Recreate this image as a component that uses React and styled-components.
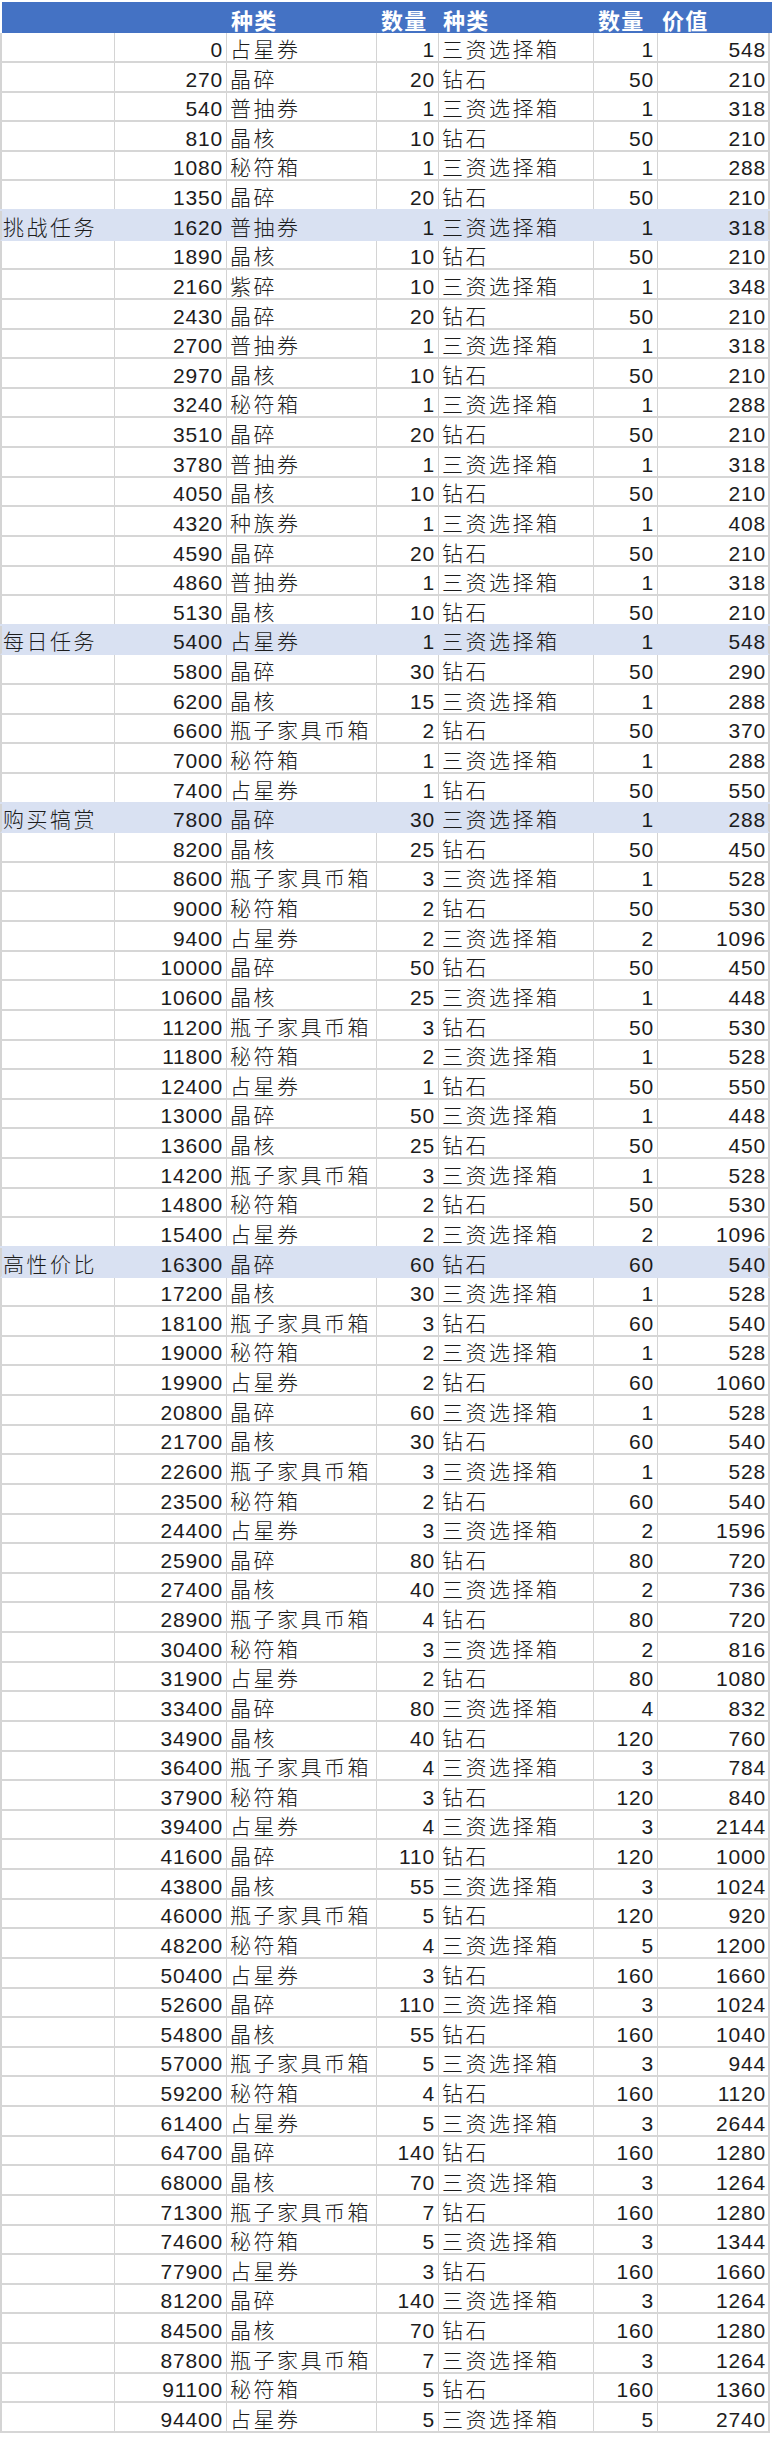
import React from 'react';
import styled, { createGlobalStyle } from 'styled-components';

const GlobalStyle = createGlobalStyle`
    html, body {
        margin: 0;
        padding: 0;
        background: #fff;
    }
    body {
        font-family: "Liberation Sans", "Noto Sans CJK SC", sans-serif;
        color: #1c1c1c;
    }
`;

const COLUMNS = '113px 112px 150px 62px 155px 64px 110px';

const Sheet = styled.div`
    width: 772px;
    padding-top: 2px;
`;

const HeaderRow = styled.div`
    display: grid;
    grid-template-columns: 113px 112px 150px 62px 155px 64px 1fr;
    height: 31.33px;
    margin-left: 2px;
    background: #4472c4;
`;

const HeaderCell = styled.div`
    display: flex;
    align-items: flex-end;
    padding-left: 4px;
    color: #fff;
    font-weight: 700;
    font-size: 22px;
    line-height: 22px;
    letter-spacing: 1.3px;
    white-space: nowrap;
`;

const Row = styled.div`
    display: grid;
    grid-template-columns: ${COLUMNS};
    box-sizing: border-box;
    width: 770px;
    height: 29.64px;
    border-left: 2px solid #d4d4d4;
    border-right: 2px solid #d4d4d4;
    border-bottom: 2px solid ${(p) => (p.$hl ? '#d9e1f2' : '#d6d6d6')};
    background: ${(p) => (p.$hl ? '#d9e1f2' : '#fff')};
    box-shadow: ${(p) => (p.$hl ? '0 -2px 0 #d9e1f2' : 'none')};

    &:first-of-type {
        height: 31px;
    }
`;

const Cell = styled.div`
    display: flex;
    align-items: flex-end;
    justify-content: ${(p) => (p.$num ? 'flex-end' : 'flex-start')};
    box-sizing: border-box;
    min-width: 0;
    padding: 0 ${(p) => (p.$num ? p.$pr || 3 : 0)}px 1px
        ${(p) => (p.$num ? 0 : p.$pl || 3)}px;
    border-right: 1px solid ${(p) => (p.$last || p.$hl ? 'transparent' : '#d4d4d4')};
    font-size: 21px;
    line-height: 21px;
    font-weight: 300;
    letter-spacing: ${(p) => (p.$num ? 0.8 : 2.5)}px;
    white-space: nowrap;
    overflow: hidden;
`;

const HEADERS = ['', '', '种类', '数量', '种类', '数量', '价值'];

// label, points, item, qty, item, qty, value
const ROWS = [
    ['', 0, '占星券', 1, '三资选择箱', 1, 548],
    ['', 270, '晶碎', 20, '钻石', 50, 210],
    ['', 540, '普抽券', 1, '三资选择箱', 1, 318],
    ['', 810, '晶核', 10, '钻石', 50, 210],
    ['', 1080, '秘符箱', 1, '三资选择箱', 1, 288],
    ['', 1350, '晶碎', 20, '钻石', 50, 210],
    ['挑战任务', 1620, '普抽券', 1, '三资选择箱', 1, 318],
    ['', 1890, '晶核', 10, '钻石', 50, 210],
    ['', 2160, '紫碎', 10, '三资选择箱', 1, 348],
    ['', 2430, '晶碎', 20, '钻石', 50, 210],
    ['', 2700, '普抽券', 1, '三资选择箱', 1, 318],
    ['', 2970, '晶核', 10, '钻石', 50, 210],
    ['', 3240, '秘符箱', 1, '三资选择箱', 1, 288],
    ['', 3510, '晶碎', 20, '钻石', 50, 210],
    ['', 3780, '普抽券', 1, '三资选择箱', 1, 318],
    ['', 4050, '晶核', 10, '钻石', 50, 210],
    ['', 4320, '种族券', 1, '三资选择箱', 1, 408],
    ['', 4590, '晶碎', 20, '钻石', 50, 210],
    ['', 4860, '普抽券', 1, '三资选择箱', 1, 318],
    ['', 5130, '晶核', 10, '钻石', 50, 210],
    ['每日任务', 5400, '占星券', 1, '三资选择箱', 1, 548],
    ['', 5800, '晶碎', 30, '钻石', 50, 290],
    ['', 6200, '晶核', 15, '三资选择箱', 1, 288],
    ['', 6600, '瓶子家具币箱', 2, '钻石', 50, 370],
    ['', 7000, '秘符箱', 1, '三资选择箱', 1, 288],
    ['', 7400, '占星券', 1, '钻石', 50, 550],
    ['购买犒赏', 7800, '晶碎', 30, '三资选择箱', 1, 288],
    ['', 8200, '晶核', 25, '钻石', 50, 450],
    ['', 8600, '瓶子家具币箱', 3, '三资选择箱', 1, 528],
    ['', 9000, '秘符箱', 2, '钻石', 50, 530],
    ['', 9400, '占星券', 2, '三资选择箱', 2, 1096],
    ['', 10000, '晶碎', 50, '钻石', 50, 450],
    ['', 10600, '晶核', 25, '三资选择箱', 1, 448],
    ['', 11200, '瓶子家具币箱', 3, '钻石', 50, 530],
    ['', 11800, '秘符箱', 2, '三资选择箱', 1, 528],
    ['', 12400, '占星券', 1, '钻石', 50, 550],
    ['', 13000, '晶碎', 50, '三资选择箱', 1, 448],
    ['', 13600, '晶核', 25, '钻石', 50, 450],
    ['', 14200, '瓶子家具币箱', 3, '三资选择箱', 1, 528],
    ['', 14800, '秘符箱', 2, '钻石', 50, 530],
    ['', 15400, '占星券', 2, '三资选择箱', 2, 1096],
    ['高性价比', 16300, '晶碎', 60, '钻石', 60, 540],
    ['', 17200, '晶核', 30, '三资选择箱', 1, 528],
    ['', 18100, '瓶子家具币箱', 3, '钻石', 60, 540],
    ['', 19000, '秘符箱', 2, '三资选择箱', 1, 528],
    ['', 19900, '占星券', 2, '钻石', 60, 1060],
    ['', 20800, '晶碎', 60, '三资选择箱', 1, 528],
    ['', 21700, '晶核', 30, '钻石', 60, 540],
    ['', 22600, '瓶子家具币箱', 3, '三资选择箱', 1, 528],
    ['', 23500, '秘符箱', 2, '钻石', 60, 540],
    ['', 24400, '占星券', 3, '三资选择箱', 2, 1596],
    ['', 25900, '晶碎', 80, '钻石', 80, 720],
    ['', 27400, '晶核', 40, '三资选择箱', 2, 736],
    ['', 28900, '瓶子家具币箱', 4, '钻石', 80, 720],
    ['', 30400, '秘符箱', 3, '三资选择箱', 2, 816],
    ['', 31900, '占星券', 2, '钻石', 80, 1080],
    ['', 33400, '晶碎', 80, '三资选择箱', 4, 832],
    ['', 34900, '晶核', 40, '钻石', 120, 760],
    ['', 36400, '瓶子家具币箱', 4, '三资选择箱', 3, 784],
    ['', 37900, '秘符箱', 3, '钻石', 120, 840],
    ['', 39400, '占星券', 4, '三资选择箱', 3, 2144],
    ['', 41600, '晶碎', 110, '钻石', 120, 1000],
    ['', 43800, '晶核', 55, '三资选择箱', 3, 1024],
    ['', 46000, '瓶子家具币箱', 5, '钻石', 120, 920],
    ['', 48200, '秘符箱', 4, '三资选择箱', 5, 1200],
    ['', 50400, '占星券', 3, '钻石', 160, 1660],
    ['', 52600, '晶碎', 110, '三资选择箱', 3, 1024],
    ['', 54800, '晶核', 55, '钻石', 160, 1040],
    ['', 57000, '瓶子家具币箱', 5, '三资选择箱', 3, 944],
    ['', 59200, '秘符箱', 4, '钻石', 160, 1120],
    ['', 61400, '占星券', 5, '三资选择箱', 3, 2644],
    ['', 64700, '晶碎', 140, '钻石', 160, 1280],
    ['', 68000, '晶核', 70, '三资选择箱', 3, 1264],
    ['', 71300, '瓶子家具币箱', 7, '钻石', 160, 1280],
    ['', 74600, '秘符箱', 5, '三资选择箱', 3, 1344],
    ['', 77900, '占星券', 3, '钻石', 160, 1660],
    ['', 81200, '晶碎', 140, '三资选择箱', 3, 1264],
    ['', 84500, '晶核', 70, '钻石', 160, 1280],
    ['', 87800, '瓶子家具币箱', 7, '三资选择箱', 3, 1264],
    ['', 91100, '秘符箱', 5, '钻石', 160, 1360],
    ['', 94400, '占星券', 5, '三资选择箱', 5, 2740],
];

const App = () => {
    return (
        <Sheet>
            <GlobalStyle />
            <HeaderRow>
                {HEADERS.map((h, i) => (
                    <HeaderCell key={i}>{h}</HeaderCell>
                ))}
            </HeaderRow>
            {ROWS.map((r, i) => {
                const hl = r[0] !== '';
                return (
                    <Row key={i} $hl={hl}>
                        <Cell $hl={hl} $pl={1}>{r[0]}</Cell>
                        <Cell $hl={hl} $num>{r[1]}</Cell>
                        <Cell $hl={hl}>{r[2]}</Cell>
                        <Cell $hl={hl} $num>{r[3]}</Cell>
                        <Cell $hl={hl}>{r[4]}</Cell>
                        <Cell $hl={hl} $num>{r[5]}</Cell>
                        <Cell $hl={hl} $num $last $pr={1}>{r[6]}</Cell>
                    </Row>
                );
            })}
        </Sheet>
    );
};

export default App;
